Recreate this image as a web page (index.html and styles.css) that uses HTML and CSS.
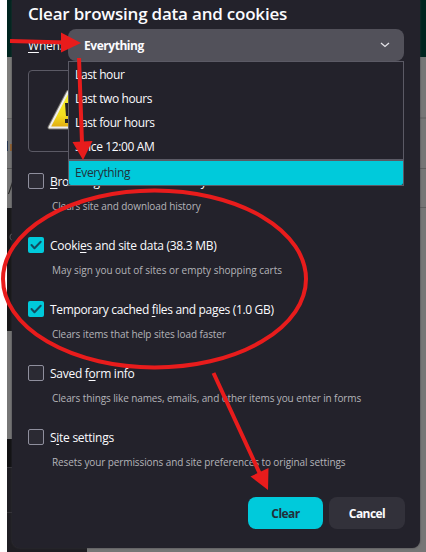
FILE: index.html
```html
<!DOCTYPE html>
<html lang="en">
<head>
<meta charset="utf-8">
<title>Clear browsing data and cookies</title>
<link rel="stylesheet" href="styles.css">
</head>
<body>
<div class="page">
  <svg class="backdrop" width="426" height="552" viewBox="0 0 426 552" aria-hidden="true">
    <rect width="426" height="552" fill="#fff"/>
    <rect x="7" width="419" height="552" fill="#767676"/>
    <rect x="7" width="419" height="57" fill="#00251f"/>
    <rect x="7" y="57" width="5" height="61" fill="#7d7d7b"/>
    <rect x="7" y="118" width="5" height="1" fill="#666"/>
    <path d="M7 141h1v10H7z" fill="#263650"/><path d="M10 144h2v7h-2z" fill="#946331"/>
    <path d="M7 168h5v1H7z" fill="#555"/><path d="M8 194l4-12v4l-3 8z" fill="#252525"/>
    <rect x="7" y="208" width="5" height="123" fill="#18181a"/>
    <path d="M12 234q-2 0-2 3t2 3" fill="none" stroke="#55555a"/>
    <rect x="7" y="439" width="80" height="28" fill="#111113"/>
    <rect x="7" y="467" width="80" height="85" fill="#1f1e23"/>
    <path d="M7 467.500h5M7 512.500h5" stroke="#353439"/>
    <path d="M420 118h6M420 168.500h6M420 207.500h6" stroke="#5f5f5f"/>
  </svg>
  <main class="dialog">
    <h1 class="title">Clear browsing data and cookies</h1>
    <div class="when">
      <label><u>W</u>hen:</label>
      <div class="select">
        <span class="value">Everything</span>
        <svg width="10" height="6" viewBox="0 0 10 6"><path d="M1 1l4 3.500L9 1" fill="none" stroke="#e4e3e8" stroke-width="1.300"/></svg>
        <ul class="menu">
          <li>Last hour</li><li>Last two hours</li><li>Last four hours</li><li>Since 12:00 AM</li>
          <li class="selected">Everything</li>
        </ul>
      </div>
    </div>
    <div class="warning">
      <svg width="42" height="40" viewBox="0 0 42 40"><defs><linearGradient id="y" x2="0" y2="1"><stop stop-color="#f4f02c"/><stop offset=".65" stop-color="#f2df20"/><stop offset="1" stop-color="#e0aa12"/></linearGradient></defs><path d="M21 2L39.500 37.500h-37z" fill="url(#y)" stroke="#77756e" stroke-width="4" stroke-linejoin="round"/><path d="M21 2L39.500 37.500h-37z" fill="url(#y)" stroke="#eee" stroke-width="2" stroke-linejoin="round"/><path d="M18 13h6l-1 13h-4zM18 29h6v4h-6z" fill="#222"/></svg>
    </div>
    <section class="option"><div class="line"><i class="check"></i><span class="name"><u>B</u>rowsing &amp; download history</span></div><p>Clears site and download history</p></section>
    <section class="option"><div class="line"><i class="check on"><svg width="16" height="16"><path d="M3.500 8l3 3.200L12.700 4.800" fill="none" stroke="#124c60" stroke-width="2" stroke-linecap="round" stroke-linejoin="round"/></svg></i><span class="name">Cooki<u>e</u>s and site data (38.3 MB)</span></div><p class="loose">May sign you out of sites or empty shopping carts</p></section>
    <section class="option"><div class="line"><i class="check on"><svg width="16" height="16"><path d="M3.500 8l3 3.200L12.700 4.800" fill="none" stroke="#124c60" stroke-width="2" stroke-linecap="round" stroke-linejoin="round"/></svg></i><span class="name tight">Temporary cached <u>f</u>iles and pages (1.0 GB)</span></div><p>Clears items that help sites load faster</p></section>
    <section class="option"><div class="line"><i class="check"></i><span class="name">Saved f<u>o</u>rm info</span></div><p>Clears things like names, emails, and other items you enter in forms</p></section>
    <section class="option"><div class="line"><i class="check"></i><span class="name">S<u>i</u>te settings</span></div><p>Resets your permissions and site preferences to original settings</p></section>
    <footer class="actions"><button class="primary">Clear</button><button>Cancel</button></footer>
  </main>
  <svg class="marks" width="426" height="552" viewBox="0 0 426 552" aria-hidden="true">
    <g fill="none" stroke="#e81c1c" stroke-width="4"><path d="M10 41L66 42.500M79 58L82 143M213.500 373L260 474"/><ellipse cx="154.500" cy="279" rx="151.500" ry="88.500"/></g>
    <path d="M61 32.500L81 43L61 52.500zM72.500 142L92.500 141L83 160zM250.500 476.500L268.500 468L268 490z" fill="#e81c1c"/>
  </svg>
</div>
</body>
</html>
```
FILE: styles.css
```css
* { box-sizing: border-box; }
body { margin: 0; overflow: hidden; font-family: "Open Sans", "Noto Sans", sans-serif; font-size: 12px; color: #fbfbfe; }
.page { position: relative; width: 426px; height: 552px; overflow: hidden; }
.backdrop, .marks { position: absolute; top: 0; left: 0; }
.marks { z-index: 5; pointer-events: none; }
.dialog { position: relative; width: 408px; height: 548px; margin-left: 12px; padding: 0 16px; background: #23222b; border-radius: 0 0 8px 8px; box-shadow: 0 0 2px #38373d; white-space: nowrap; }
.title { height: 29px; margin: 0; font-size: 17px; line-height: 27px; font-weight: 600; letter-spacing: -0.21px; }
.when { display: flex; align-items: center; height: 32px; }
.when label { width: 40px; letter-spacing: -0.2px; }
u { text-decoration: underline; text-decoration-thickness: 1px; text-underline-offset: 2px; }
.select { position: relative; flex: 0 0 336px; height: 32px; padding: 0 14px 0 16px; display: flex; align-items: center; justify-content: space-between; border-radius: 8px; background: #52515a; font-weight: 700; }
.value { letter-spacing: -0.45px; }
.menu { position: absolute; z-index: 2; top: 32px; left: 0; width: 336px; height: 125px; margin: 0; padding: 1px 0 0; list-style: none; border: 1px solid #5b5a65; background: #23222b; font-weight: 400; letter-spacing: -0.38px; }
.menu li { height: 24px; padding-left: 6px; line-height: 24px; }
.menu .selected { height: 26px; border-top: 2px solid #5b5a65; background: #00cadb; color: #20303a; border-radius: 0 0 2px 2px; }
.warning { width: 376px; height: 82px; margin: 9px 0 21px; padding: 19px 18px; border: 1px solid #5b5a65; border-radius: 4px; }
.option { height: 64px; }
.line { display: flex; align-items: center; height: 16px; gap: 6px; }
.name { letter-spacing: -0.27px; }
.name.tight { letter-spacing: -0.33px; }
.check { width: 16px; height: 16px; border: 1px solid #8f8f9d; border-radius: 2px; background: #2b2a33; }
.check.on { border: 0; background: #00cadb; }
.check svg { display: block; }
.option p { margin: 9px 0 0 24px; font-size: 10px; line-height: 16px; color: #b4b4b9; letter-spacing: -0.1px; }
.option p.loose { letter-spacing: -0.02px; }
.actions { display: flex; justify-content: flex-end; gap: 6px; margin: 4px -1px 0 0; }
button { width: 76px; height: 32px; padding: 0; border: 0; border-radius: 8px; background: #32313a; color: #fbfbfe; font: 700 12px "Open Sans", sans-serif; letter-spacing: -0.55px; }
.primary { width: 75px; background: #00cadb; color: #20303a; }
```
